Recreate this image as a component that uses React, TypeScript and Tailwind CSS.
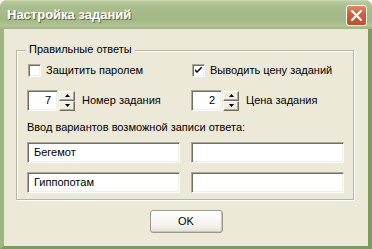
import React from "react";

const sunken =
  "border border-t-[#aca899] border-l-[#aca899] border-b-white border-r-white shadow-[inset_1px_1px_0_#716f64,inset_-1px_-1px_0_#f1efe2] bg-white";

function Check({ checked, label }: { checked?: boolean; label: string }) {
  return (
    <div className="flex items-center h-[13px] gap-[5px] pl-[1px]">
      <div className={`w-[13px] h-[13px] ${sunken} flex items-center justify-center`}>
        {checked && (
          <svg width="7" height="7" viewBox="0 0 7 7">
            <path d="M0 2 L0 4 L2 6 L7 1 L7 -1 L2 4 Z" fill="#000" />
          </svg>
        )}
      </div>
      <span>{label}</span>
    </div>
  );
}

function SpinBtn({ up }: { up?: boolean }) {
  return (
    <div className="w-[16px] h-[10px] bg-[#f0efe6] border border-t-white border-l-white border-b-[#716f64] border-r-[#716f64] shadow-[inset_-1px_-1px_0_#aca899] flex items-center justify-center">
      <svg width="5" height="3" viewBox="0 0 5 3">
        {up ? <path d="M2.5 0 L5 3 L0 3 Z" fill="#000" /> : <path d="M0 0 L5 0 L2.5 3 Z" fill="#000" />}
      </svg>
    </div>
  );
}

function Spinner({ value, label }: { value: string; label: string }) {
  return (
    <div className="flex items-center h-[21px]">
      <div className={`w-[31px] h-[21px] ${sunken} flex items-center justify-end pr-[6px]`}>{value}</div>
      <div className="flex flex-col ml-[1px]">
        <SpinBtn up />
        <SpinBtn />
      </div>
      <span className="ml-[7px]">{label}</span>
    </div>
  );
}

function Field({ value }: { value?: string }) {
  return (
    <div className={`h-[21px] ${sunken} flex items-center pl-[6px]`}>{value ?? ""}</div>
  );
}

export default function App() {
  return (
    <div className="w-[372px] h-[249px] bg-white font-['Tahoma','Liberation_Sans',sans-serif] text-[11px] text-black">
      <div className="w-[372px] h-[249px] flex flex-col rounded-t-[7px] overflow-hidden bg-[#a4b985]">
        {/* title bar */}
        <div className="h-[29px] flex items-center justify-between pl-[7px] pr-[5px] bg-[linear-gradient(to_bottom,#cfdcb6_0px,#b6c79a_2px,#a9bc8c_8px,#a4b886_20px,#b3c497_26px,#a0b281_29px)]">
          <span className="text-white font-bold text-[13px] font-['Liberation_Sans',sans-serif] [text-shadow:1px_1px_0_#5b6b3d]">
            Настройка заданий
          </span>
          <div className="w-[21px] h-[21px] mt-[2px] rounded-[3px] border border-white bg-[linear-gradient(to_bottom,#e08a6a,#d2603a_40%,#c14f2c)] flex items-center justify-center">
            <svg width="11" height="11" viewBox="0 0 11 11">
              <path d="M1 1 L10 10 M10 1 L1 10" stroke="#fff" strokeWidth="2.2" strokeLinecap="square" />
            </svg>
          </div>
        </div>
        {/* client */}
        <div className="flex-1 flex flex-col bg-[#ece9d8] border-l-[4px] border-r-[4px] border-b-[3px] border-[#8ca66a] border-l-[#9db67d] border-r-[#7f9a5e] border-b-[#7f9a5e]">
          <div className="relative mt-[21px] ml-[12px] mr-[14px] h-[150px] border border-[#b8b5a4] shadow-[inset_1px_1px_0_#fff,1px_1px_0_#fff] pl-[10px] pr-[9px]">
            <span className="absolute left-[9px] top-[-8px] bg-[#ece9d8] px-[3px] leading-[13px]">
              Правильные ответы
            </span>
            <div className="grid grid-cols-2 gap-x-[11px] mt-[13px]">
              <Check label="Защитить паролем" />
              <Check checked label="Выводить цену заданий" />
            </div>
            <div className="grid grid-cols-2 gap-x-[11px] mt-[13px]">
              <Spinner value="7" label="Номер задания" />
              <Spinner value="2" label="Цена задания" />
            </div>
            <div className="mt-[10px] leading-[13px]">Ввод вариантов возможной записи ответа:</div>
            <div className="grid grid-cols-2 gap-x-[11px] gap-y-[9px] mt-[8px]">
              <Field value="Бегемот" />
              <Field />
              <Field value="Гиппопотам" />
              <Field />
            </div>
          </div>
          <div className="flex justify-center mt-[10px]">
            <div className="w-[73px] h-[23px] rounded-[3px] border border-[#9c9a8c] bg-[linear-gradient(to_bottom,#ffffff,#f3f2ec_70%,#e3e1d4)] shadow-[inset_-1px_-1px_0_#c9c6b6] flex items-center justify-center">
              OK
            </div>
          </div>
        </div>
      </div>
    </div>
  );
}
